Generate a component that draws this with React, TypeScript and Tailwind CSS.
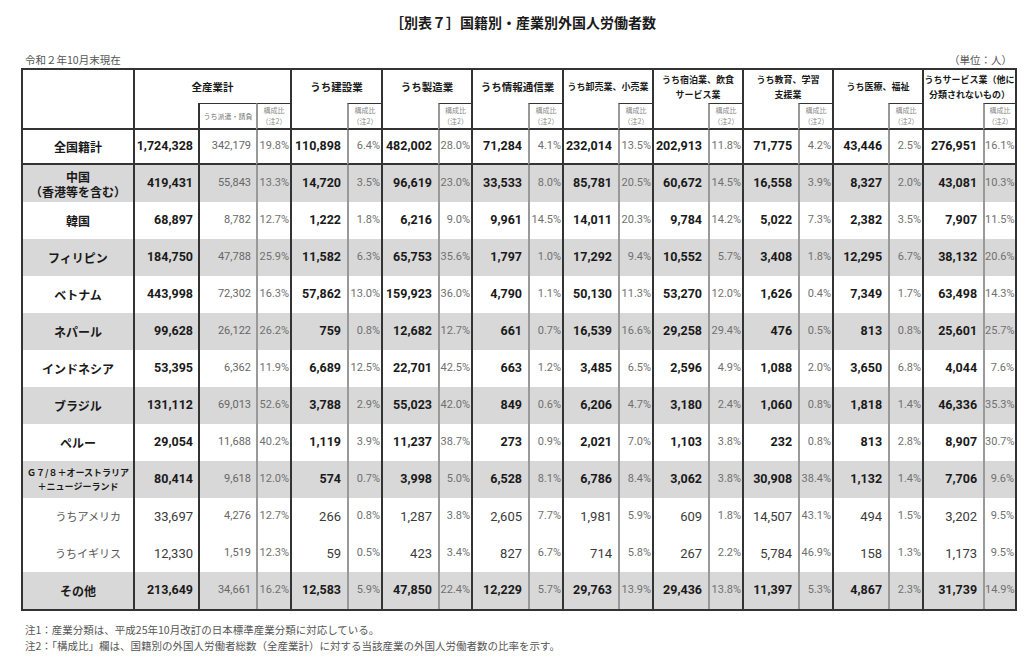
const cols = [
  "w-[110px]", "w-[65px]", "w-[58px]", "w-[34px]",
  "w-[57px]", "w-[34px]", "w-[57px]", "w-[33px]",
  "w-[57px]", "w-[34px]", "w-[56px]", "w-[34px]",
  "w-[56px]", "w-[34px]", "w-[56px]", "w-[34px]",
  "w-[56px]", "w-[34px]", "w-[61px]", "w-[32px]",
]

const groups = [
  { lines: ["うち建設業"], small: false },
  { lines: ["うち製造業"], small: false },
  { lines: ["うち情報通信業"], small: false },
  { lines: ["うち卸売業、小売業"], small: true },
  { lines: ["うち宿泊業、飲食", "サービス業"], small: true },
  { lines: ["うち教育、学習", "支援業"], small: true },
  { lines: ["うち医療、福祉"], small: true },
  { lines: ["うちサービス業（他に", "分類されないもの）"], small: true },
]

type Row = {
  label: string[]
  kind: "main" | "sub" | "tiny"
  gray: boolean
  d: string[]
}

const rows: Row[] = [
  { label: ["全国籍計"], kind: "main", gray: false, d: ["1,724,328", "342,179", "19.8%", "110,898", "6.4%", "482,002", "28.0%", "71,284", "4.1%", "232,014", "13.5%", "202,913", "11.8%", "71,775", "4.2%", "43,446", "2.5%", "276,951", "16.1%"] },
  { label: ["中国", "（香港等を含む）"], kind: "main", gray: true, d: ["419,431", "55,843", "13.3%", "14,720", "3.5%", "96,619", "23.0%", "33,533", "8.0%", "85,781", "20.5%", "60,672", "14.5%", "16,558", "3.9%", "8,327", "2.0%", "43,081", "10.3%"] },
  { label: ["韓国"], kind: "main", gray: false, d: ["68,897", "8,782", "12.7%", "1,222", "1.8%", "6,216", "9.0%", "9,961", "14.5%", "14,011", "20.3%", "9,784", "14.2%", "5,022", "7.3%", "2,382", "3.5%", "7,907", "11.5%"] },
  { label: ["フィリピン"], kind: "main", gray: true, d: ["184,750", "47,788", "25.9%", "11,582", "6.3%", "65,753", "35.6%", "1,797", "1.0%", "17,292", "9.4%", "10,552", "5.7%", "3,408", "1.8%", "12,295", "6.7%", "38,132", "20.6%"] },
  { label: ["ベトナム"], kind: "main", gray: false, d: ["443,998", "72,302", "16.3%", "57,862", "13.0%", "159,923", "36.0%", "4,790", "1.1%", "50,130", "11.3%", "53,270", "12.0%", "1,626", "0.4%", "7,349", "1.7%", "63,498", "14.3%"] },
  { label: ["ネパール"], kind: "main", gray: true, d: ["99,628", "26,122", "26.2%", "759", "0.8%", "12,682", "12.7%", "661", "0.7%", "16,539", "16.6%", "29,258", "29.4%", "476", "0.5%", "813", "0.8%", "25,601", "25.7%"] },
  { label: ["インドネシア"], kind: "main", gray: false, d: ["53,395", "6,362", "11.9%", "6,689", "12.5%", "22,701", "42.5%", "663", "1.2%", "3,485", "6.5%", "2,596", "4.9%", "1,088", "2.0%", "3,650", "6.8%", "4,044", "7.6%"] },
  { label: ["ブラジル"], kind: "main", gray: true, d: ["131,112", "69,013", "52.6%", "3,788", "2.9%", "55,023", "42.0%", "849", "0.6%", "6,206", "4.7%", "3,180", "2.4%", "1,060", "0.8%", "1,818", "1.4%", "46,336", "35.3%"] },
  { label: ["ペルー"], kind: "main", gray: false, d: ["29,054", "11,688", "40.2%", "1,119", "3.9%", "11,237", "38.7%", "273", "0.9%", "2,021", "7.0%", "1,103", "3.8%", "232", "0.8%", "813", "2.8%", "8,907", "30.7%"] },
  { label: ["Ｇ７/８＋オーストラリア", "＋ニュージーランド"], kind: "tiny", gray: true, d: ["80,414", "9,618", "12.0%", "574", "0.7%", "3,998", "5.0%", "6,528", "8.1%", "6,786", "8.4%", "3,062", "3.8%", "30,908", "38.4%", "1,132", "1.4%", "7,706", "9.6%"] },
  { label: ["うちアメリカ"], kind: "sub", gray: false, d: ["33,697", "4,276", "12.7%", "266", "0.8%", "1,287", "3.8%", "2,605", "7.7%", "1,981", "5.9%", "609", "1.8%", "14,507", "43.1%", "494", "1.5%", "3,202", "9.5%"] },
  { label: ["うちイギリス"], kind: "sub", gray: false, d: ["12,330", "1,519", "12.3%", "59", "0.5%", "423", "3.4%", "827", "6.7%", "714", "5.8%", "267", "2.2%", "5,784", "46.9%", "158", "1.3%", "1,173", "9.5%"] },
  { label: ["その他"], kind: "main", gray: true, d: ["213,649", "34,661", "16.2%", "12,583", "5.9%", "47,850", "22.4%", "12,229", "5.7%", "29,763", "13.9%", "29,436", "13.8%", "11,397", "5.3%", "4,867", "2.3%", "31,739", "14.9%"] },
]

function Ratio() {
  return (
    <div className="text-[7px] leading-[11px] text-[#8a8a8a] text-center">
      <div>構成比</div>
      <div>（注2）</div>
    </div>
  )
}

export default function App() {
  return (
    <div className="w-[1024px] h-[660px] bg-white text-[#1a1a1a] font-['Noto_Sans_CJK_JP',sans-serif] overflow-hidden">
      <h1 className="pt-[12px] pl-[22px] text-center text-[14px] leading-[20px] font-bold">
        ［別表７］国籍別・産業別外国人労働者数
      </h1>

      <div className="flex justify-between mt-[21px] pl-[25px] pr-[12px] text-[10.5px] leading-[14px] text-[#555]">
        <span>令和２年10月末現在</span>
        <span>（単位：人）</span>
      </div>

      <div className="mt-[1px] ml-[21px] w-[996px] border-2 border-[#333]">
        <table className="w-full table-fixed border-separate border-spacing-0">
          <colgroup>
            {cols.map((c, i) => (
              <col key={i} className={c} />
            ))}
          </colgroup>
          <thead>
            <tr className="h-[33px]">
              <th rowSpan={2} className="border-b-2 border-[#333]" />
              <th colSpan={3} className="border-l-2 border-[#333] text-[10.5px] font-bold">
                全産業計
              </th>
              {groups.map((g, i) => (
                <th
                  key={i}
                  colSpan={2}
                  className={
                    g.small
                      ? "border-l-2 border-[#333] text-[9px] leading-[15px] font-bold"
                      : "border-l-2 border-[#333] text-[10.5px] leading-[15px] font-bold"
                  }
                >
                  {g.lines.map((l) => (
                    <div key={l}>{l}</div>
                  ))}
                </th>
              ))}
            </tr>
            <tr className="h-[27px]">
              <td className="border-l-2 border-b-2 border-[#333]" />
              <td className="border-l-2 border-t border-b-2 border-[#333] text-[7px] text-[#777] text-center whitespace-nowrap">
                うち派遣・請負
              </td>
              <td className="border-l-2 border-t border-b-2 border-[#333] border-l-[#999]">
                <Ratio />
              </td>
              {groups.map((_, i) => [
                <td key={`a${i}`} className="border-l-2 border-b-2 border-[#333]" />,
                <td key={`b${i}`} className="border-l-2 border-t border-b-2 border-[#333] border-l-[#999]">
                  <Ratio />
                </td>,
              ])}
            </tr>
          </thead>
          <tbody>
            {rows.map((r, ri) => {
              const first = ri === 0
              const sub = r.kind === "sub"
              return (
                <tr key={ri} className={`${first ? "h-[35px]" : "h-[37px]"} ${r.gray ? "bg-[#d8d8d8]" : ""}`}>
                  <td
                    className={`${first ? "border-b-2 border-[#333]" : ""} ${
                      sub
                        ? "text-right pr-[12px] text-[11px] text-[#555]"
                        : r.kind === "tiny"
                          ? "text-center text-[9px] leading-[14px] font-bold"
                          : "text-center text-[12px] leading-[15px] font-bold"
                    }`}
                  >
                    {r.label.map((l) => (
                      <div key={l} className="whitespace-nowrap">{l}</div>
                    ))}
                  </td>
                  {r.d.map((v, ci) => {
                    const pct = v.endsWith("%")
                    const haken = ci === 1
                    const border = `${first ? "border-b-2 border-[#333]" : "border-[#333]"} border-l-2 ${pct ? "border-l-[#999]" : ""}`
                    const text = pct
                      ? "pr-[1px] text-[11px] text-[#707070]"
                      : haken
                        ? "pr-[5px] text-[11px] text-[#666]"
                        : sub
                          ? `${ci === 0 ? "pr-[5px]" : "pr-[6px]"} text-[13px] text-[#3a3a3a]`
                          : `${ci === 0 ? "pr-[5px]" : "pr-[6px]"} text-[12.5px] font-bold`
                    return (
                      <td key={ci} className={`${border} ${text} font-['Roboto',sans-serif] text-right whitespace-nowrap`}>
                        {v}
                      </td>
                    )
                  })}
                </tr>
              )
            })}
          </tbody>
        </table>
      </div>

      <div className="mt-[11px] pl-[25px] text-[10.5px] leading-[16px] text-[#555]">
        <div>注1：産業分類は、平成25年10月改訂の日本標準産業分類に対応している。</div>
        <div>注2：「構成比」欄は、国籍別の外国人労働者総数（全産業計）に対する当該産業の外国人労働者数の比率を示す。</div>
      </div>
    </div>
  )
}
